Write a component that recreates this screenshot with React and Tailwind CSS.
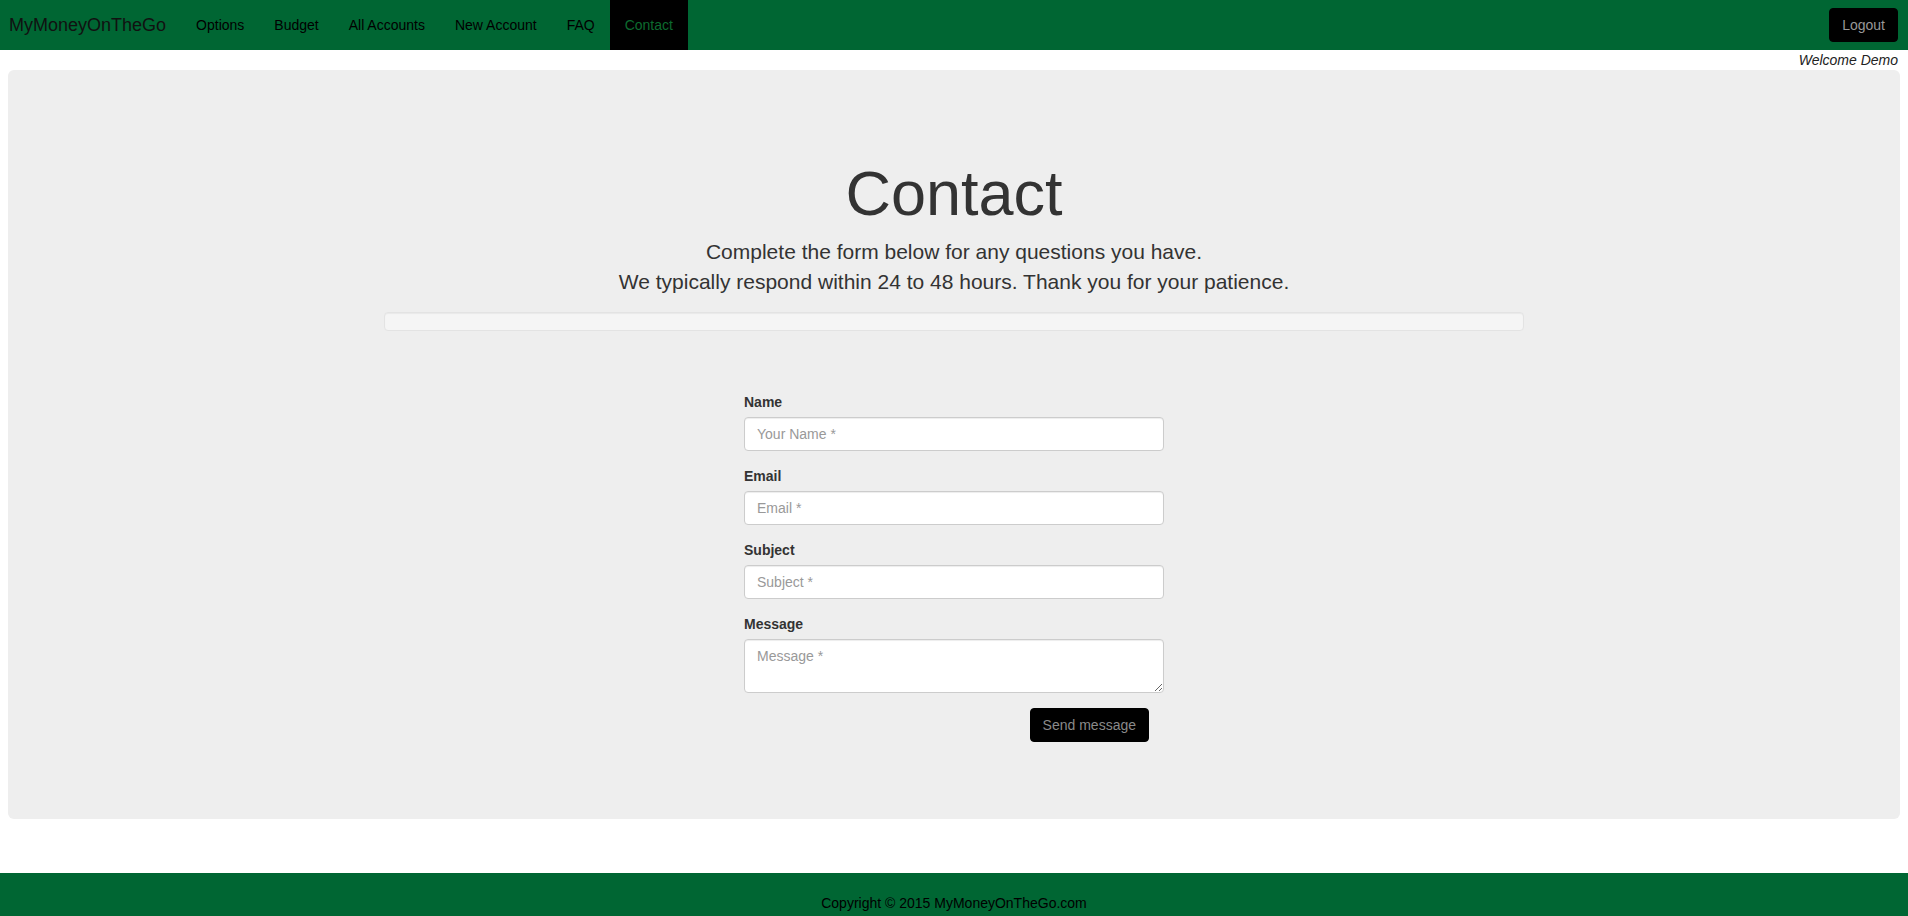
import React from "react";

export default function App() {
  const links = ["Options", "Budget", "All Accounts", "New Account", "FAQ"];
  return (
    <div className="min-h-screen bg-white text-[14px] leading-[20px] text-[#333]" style={{ fontFamily: '"Liberation Sans", Arial, Helvetica, sans-serif' }}>
      <nav className="h-[50px] bg-[#006633] flex items-center justify-between">
        <div className="flex h-full items-stretch">
          <a className="pl-[9px] pr-[15px] text-[18px] leading-[50px] text-[#111]">MyMoneyOnTheGo</a>
          {links.map((l) => (
            <a key={l} className="px-[15px] leading-[50px] text-[14px] text-black">{l}</a>
          ))}
          <a className="px-[15px] leading-[50px] text-[14px] bg-black text-[#0d6b2f]">Contact</a>
        </div>
        <button className="mr-[10px] h-[34px] px-[12px] bg-black border border-black text-[#999] rounded-[4px] text-[14px]">Logout</button>
      </nav>
      <div className="text-right pr-[10px] italic leading-[20px] text-[14px] text-[#222]">Welcome Demo</div>
      <div className="mx-[8px] h-[749px] bg-[#eeeeee] rounded-[6px] pt-[89px]">
        <h1 className="text-center text-[63px] leading-[1.1] text-[#333]">Contact</h1>
        <div className="mt-[9px] text-center text-[21px] leading-[1.4] font-extralight text-[#333]">
          <p>Complete the form below for any questions you have.</p>
          <p>We typically respond within 24 to 48 hours. Thank you for your patience.</p>
        </div>
        <div className="mt-[16px] mx-auto w-[1140px] h-[19px] bg-[#f5f5f5] border border-[#e3e3e3] rounded-[4px] shadow-[inset_0_1px_1px_rgba(0,0,0,0.05)]"></div>
        <form className="mx-auto w-[420px] mt-[61px]" onSubmit={(e) => e.preventDefault()}>
          <div className="mb-[15px]">
            <label className="block font-bold mb-[5px] text-[#333]">Name</label>
            <input className="block w-full h-[34px] px-[12px] bg-white border border-[#ccc] rounded-[4px] text-[14px] placeholder:text-[#999] shadow-[inset_0_1px_1px_rgba(0,0,0,0.075)] outline-none" placeholder="Your Name *" />
          </div>
          <div className="mb-[15px]">
            <label className="block font-bold mb-[5px] text-[#333]">Email</label>
            <input className="block w-full h-[34px] px-[12px] bg-white border border-[#ccc] rounded-[4px] text-[14px] placeholder:text-[#999] shadow-[inset_0_1px_1px_rgba(0,0,0,0.075)] outline-none" placeholder="Email *" />
          </div>
          <div className="mb-[15px]">
            <label className="block font-bold mb-[5px] text-[#333]">Subject</label>
            <input className="block w-full h-[34px] px-[12px] bg-white border border-[#ccc] rounded-[4px] text-[14px] placeholder:text-[#999] shadow-[inset_0_1px_1px_rgba(0,0,0,0.075)] outline-none" placeholder="Subject *" />
          </div>
          <div className="mb-[15px]">
            <label className="block font-bold mb-[5px] text-[#333]">Message</label>
            <textarea className="block w-full h-[54px] px-[12px] py-[6px] bg-white border border-[#ccc] rounded-[4px] text-[14px] leading-[20px] placeholder:text-[#999] shadow-[inset_0_1px_1px_rgba(0,0,0,0.075)] outline-none" placeholder="Message *"></textarea>
          </div>
          <div className="flex justify-end pr-[15px]">
            <button className="h-[34px] px-[12px] bg-black border border-black text-[#8a8a8a] rounded-[4px] text-[14px]">Send message</button>
          </div>
        </form>
      </div>
      <footer className="mt-[54px] h-[60px] bg-[#006633] pt-[20px] text-center text-black text-[14px] leading-[20px]">
        Copyright © 2015 MyMoneyOnTheGo.com
      </footer>
    </div>
  );
}
